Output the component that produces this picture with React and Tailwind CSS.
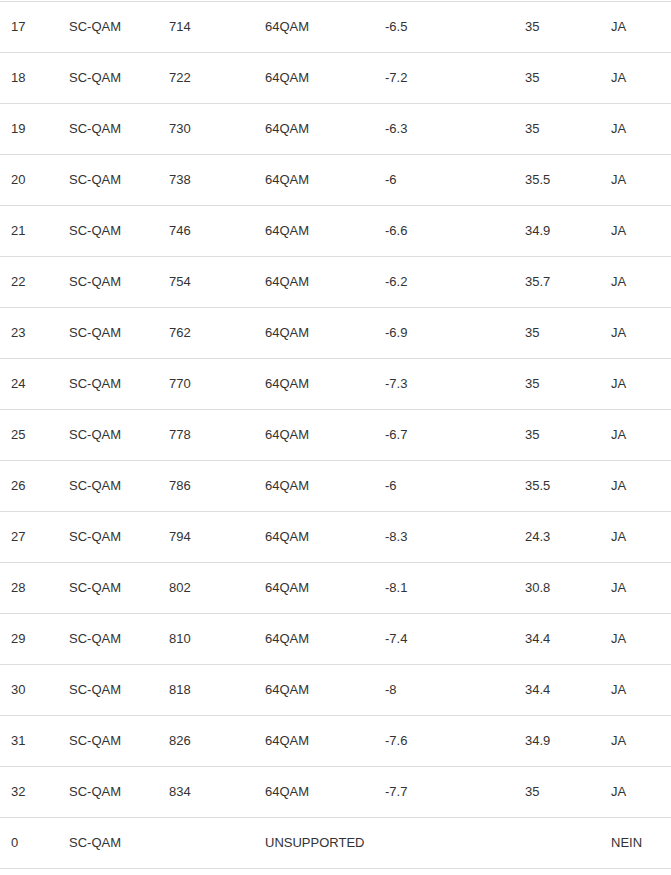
const rows = [
  ["17", "SC-QAM", "714", "64QAM", "-6.5", "35", "JA"],
  ["18", "SC-QAM", "722", "64QAM", "-7.2", "35", "JA"],
  ["19", "SC-QAM", "730", "64QAM", "-6.3", "35", "JA"],
  ["20", "SC-QAM", "738", "64QAM", "-6", "35.5", "JA"],
  ["21", "SC-QAM", "746", "64QAM", "-6.6", "34.9", "JA"],
  ["22", "SC-QAM", "754", "64QAM", "-6.2", "35.7", "JA"],
  ["23", "SC-QAM", "762", "64QAM", "-6.9", "35", "JA"],
  ["24", "SC-QAM", "770", "64QAM", "-7.3", "35", "JA"],
  ["25", "SC-QAM", "778", "64QAM", "-6.7", "35", "JA"],
  ["26", "SC-QAM", "786", "64QAM", "-6", "35.5", "JA"],
  ["27", "SC-QAM", "794", "64QAM", "-8.3", "24.3", "JA"],
  ["28", "SC-QAM", "802", "64QAM", "-8.1", "30.8", "JA"],
  ["29", "SC-QAM", "810", "64QAM", "-7.4", "34.4", "JA"],
  ["30", "SC-QAM", "818", "64QAM", "-8", "34.4", "JA"],
  ["31", "SC-QAM", "826", "64QAM", "-7.6", "34.9", "JA"],
  ["32", "SC-QAM", "834", "64QAM", "-7.7", "35", "JA"],
  ["0", "SC-QAM", "", "UNSUPPORTED", "", "", "NEIN"],
];

export default function App() {
  return (
    <div className="w-[671px] h-[875px] bg-white overflow-hidden pt-px text-[13px] text-[#333] font-['Liberation_Sans',Arial,sans-serif]">
      <div className="border-b border-[#dedede]">
        {rows.map((r, i) => (
          <div key={i} className="flex h-[51px] items-center border-t border-[#dedede]">
            <div className="w-[58px] pl-[11px]">{r[0]}</div>
            <div className="w-[100px] pl-[11px]">{r[1]}</div>
            <div className="w-[96px] pl-[11px]">{r[2]}</div>
            <div className="w-[120px] pl-[11px]">{r[3]}</div>
            <div className="w-[140px] pl-[11px]">{r[4]}</div>
            <div className="w-[86px] pl-[11px]">{r[5]}</div>
            <div className="flex-1 pl-[11px]">{r[6]}</div>
          </div>
        ))}
      </div>
    </div>
  );
}
